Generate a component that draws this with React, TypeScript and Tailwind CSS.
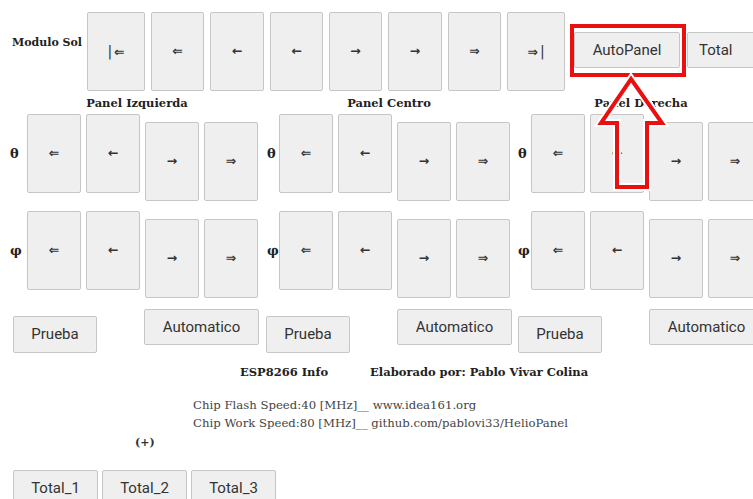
import React from 'react';

const serif = "font-['DejaVu_Serif',serif]";
const roboto = "font-['Roboto',sans-serif]";
const arrowFont = "font-['DejaVu_Sans',sans-serif] font-bold text-[12.5px]";
const btn =
  'bg-[#efefef] border border-[#c6c6c6] rounded-[2px] text-[#333] flex items-center justify-center shrink-0';

function ArrowBtn({ glyph, extra = '' }: { glyph: string; extra?: string }) {
  return <div className={`${btn} w-[54px] h-[79px] ${arrowFont} ${extra}`}>{glyph}</div>;
}

const panels = [
  { title: 'Panel Izquierda', labelPad: 'pl-[2px]', rowPad: 'ml-[5px]' },
  { title: 'Panel Centro', labelPad: 'pl-[7px]', rowPad: 'ml-[6px]' },
  { title: 'Panel Derecha', labelPad: 'pl-[6px]', rowPad: 'ml-[6px]' },
];

function AxisRow({ label, mt }: { label: string; mt: string }) {
  return (
    <div className={`flex items-start pl-[8px] ${mt}`}>
      {panels.map((p) => (
        <div key={p.title} className="flex w-[252px] shrink-0 items-start">
          <div className={`w-[19px] h-[79px] shrink-0 flex items-center ${p.labelPad} ${serif} font-bold text-[13px] text-[#222]`}>
            {label}
          </div>
          <div className="flex gap-[5px]">
            <ArrowBtn glyph="⇐" />
            <ArrowBtn glyph="←" />
            <ArrowBtn glyph="→" extra="mt-[8px]" />
            <ArrowBtn glyph="⇒" extra="mt-[8px]" />
          </div>
        </div>
      ))}
    </div>
  );
}

export default function App() {
  const top = [
    { g: '|⇐', w: 'w-[58px]' },
    { g: '⇐', w: 'w-[53px]' },
    { g: '←', w: 'w-[54px]' },
    { g: '←', w: 'w-[53px]' },
    { g: '→', w: 'w-[53px]' },
    { g: '→', w: 'w-[54px]' },
    { g: '⇒', w: 'w-[53px]' },
    { g: '⇒|', w: 'w-[58px]' },
  ];

  return (
    <div className="relative w-[753px] h-[499px] overflow-hidden bg-white">
      {/* Modulo Sol row */}
      <div className="flex items-start pt-[12px] pl-[12px]">
        <div className={`w-[75px] h-[62px] shrink-0 flex items-center whitespace-nowrap ${serif} font-bold text-[11px] text-[#222]`}>
          Modulo Sol
        </div>
        <div className="flex gap-[6px]">
          {top.map((b, i) => (
            <div key={i} className={`${btn} ${b.w} h-[79px] ${arrowFont}`}>
              {b.g === '|⇐' ? (
                <span>
                  <span className="font-normal text-[14px] mr-[2px]">|</span>⇐
                </span>
              ) : b.g === '⇒|' ? (
                <span>
                  ⇒<span className="font-normal text-[14px] ml-[2px]">|</span>
                </span>
              ) : (
                b.g
              )}
            </div>
          ))}
          <div className={`${btn} ${roboto} ml-[3px] mt-[20px] w-[106px] h-[36px] text-[15px]`}>AutoPanel</div>
          <div className={`${btn} ${roboto} ml-[1px] mt-[20px] w-[70px] h-[36px] text-[15px] justify-start pl-[11px]`}>
            Total
          </div>
        </div>
      </div>

      {/* panel titles */}
      <div className="flex pl-[8px] mt-[4px]">
        {panels.map((p) => (
          <div
            key={p.title}
            className={`w-[252px] shrink-0 flex justify-center pl-[6px] ${serif} font-bold text-[11.5px] leading-[16px] text-[#222]`}
          >
            {p.title}
          </div>
        ))}
      </div>

      <AxisRow label="θ" mt="mt-[3px]" />
      <AxisRow label="φ" mt="mt-[10px]" />

      {/* Prueba / Automatico */}
      <div className="flex pl-[8px] mt-[11px]">
        {panels.map((p) => (
          <div key={p.title} className="flex w-[252px] shrink-0 items-start">
            <div className={`${btn} ${roboto} ${p.rowPad} mt-[7px] w-[84px] h-[37px] text-[15px]`}>Prueba</div>
            <div className={`${btn} ${roboto} ml-[47px] w-[115px] h-[36px] text-[15px]`}>Automatico</div>
          </div>
        ))}
      </div>

      {/* info */}
      <div className={`flex mt-[10px] ${serif} font-bold text-[11.5px] leading-[18px] text-[#222]`}>
        <span className="ml-[240px]">ESP8266 Info</span>
        <span className="ml-[42px]">Elaborado por: Pablo Vivar Colina</span>
      </div>

      <div className={`ml-[193px] mt-[15px] ${serif} text-[11.7px] leading-[18px] text-[#444]`}>
        <div>Chip Flash Speed:40 [MHz]__ www.idea161.org</div>
        <div>Chip Work Speed:80 [MHz]__ github.com/pablovi33/HelioPanel</div>
      </div>

      <div className={`ml-[135px] mt-[3px] ${serif} font-bold text-[11px] leading-[16px] text-[#333]`}>(+)</div>

      <div className="flex gap-[4px] pl-[13px] mt-[19px]">
        {['Total_1', 'Total_2', 'Total_3'].map((t) => (
          <div key={t} className={`${btn} ${roboto} w-[85px] h-[37px] text-[15px]`}>
            {t}
          </div>
        ))}
      </div>

      {/* red annotation overlay */}
      <svg className="absolute left-0 top-0 pointer-events-none" width="753" height="499">
        <rect x="572" y="26" width="112" height="49" fill="none" stroke="#e81010" strokeWidth="4" />
        <path
          d="M631 79 L662 123 L647 123 L647 187 L617 187 L617 123 L601 123 Z"
          fill="none"
          stroke="white"
          strokeWidth="8"
        />
        <path
          d="M631 79 L662 123 L647 123 L647 187 L617 187 L617 123 L601 123 Z"
          fill="none"
          stroke="#e81010"
          strokeWidth="4"
        />
      </svg>
    </div>
  );
}
